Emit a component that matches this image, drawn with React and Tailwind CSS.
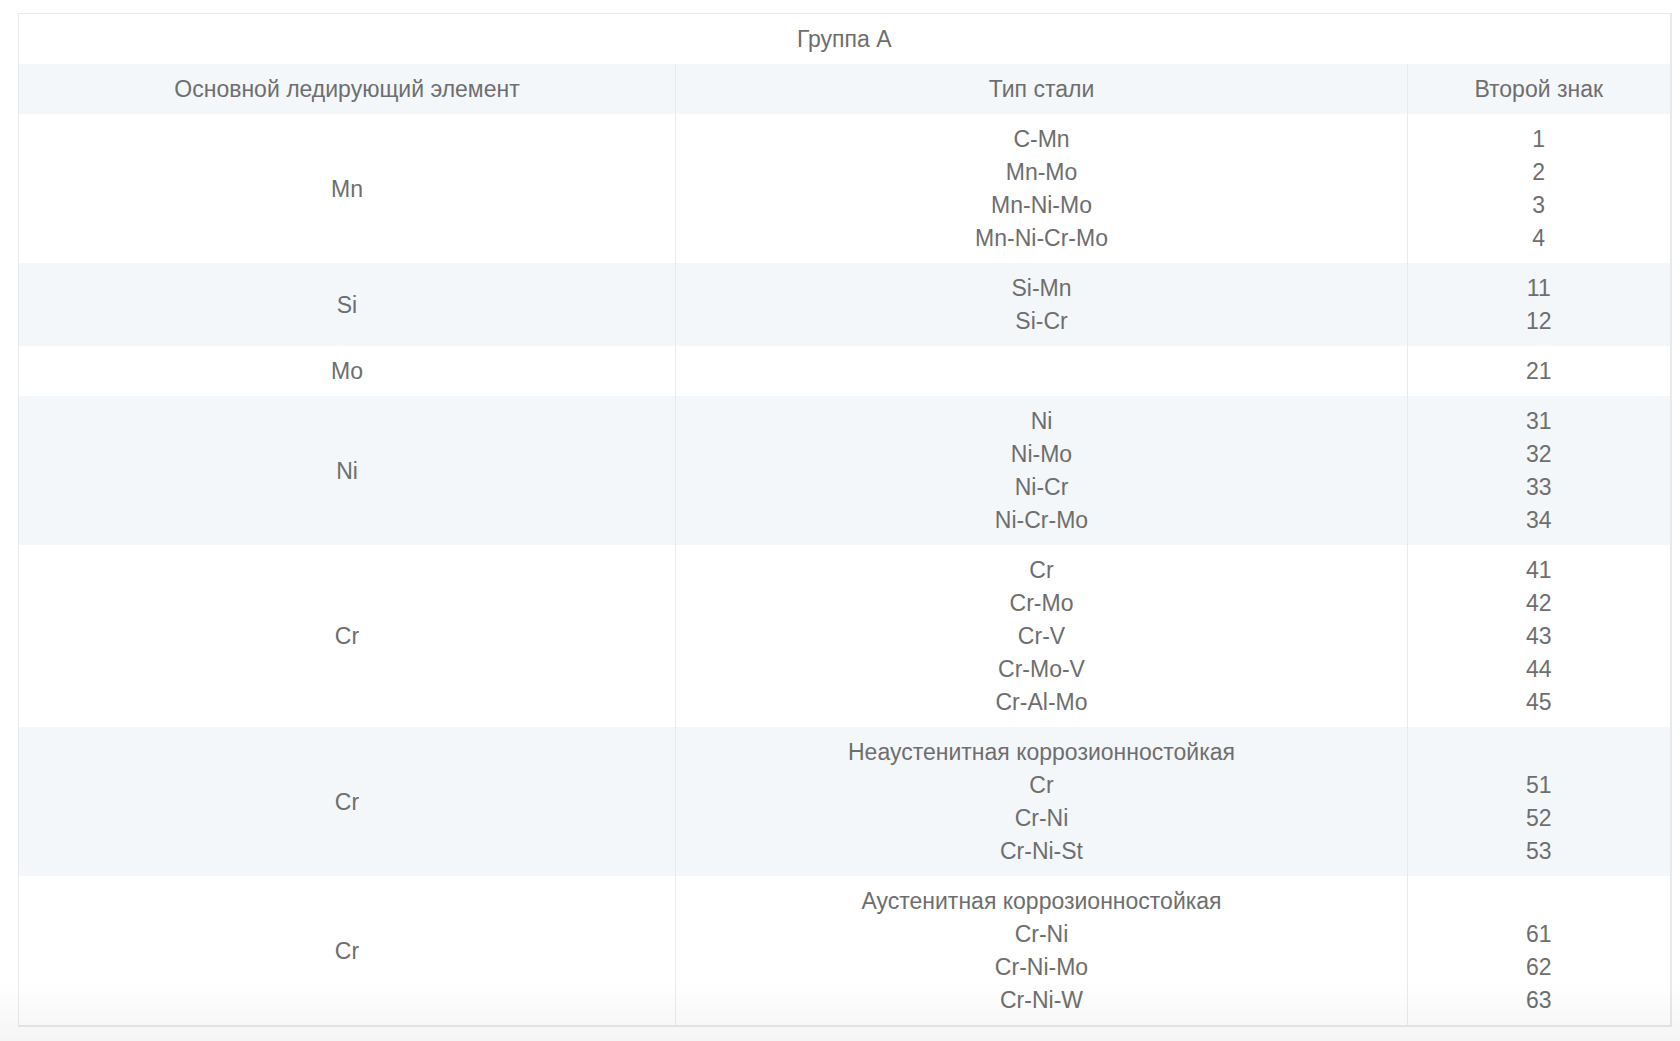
const rows = [
  { el: 'Mn', types: ['C-Mn', 'Mn-Mo', 'Mn-Ni-Mo', 'Mn-Ni-Cr-Mo'], codes: ['1', '2', '3', '4'] },
  { el: 'Si', types: ['Si-Mn', 'Si-Cr'], codes: ['11', '12'] },
  { el: 'Mo', types: [''], codes: ['21'] },
  { el: 'Ni', types: ['Ni', 'Ni-Mo', 'Ni-Cr', 'Ni-Cr-Mo'], codes: ['31', '32', '33', '34'] },
  { el: 'Cr', types: ['Cr', 'Cr-Mo', 'Cr-V', 'Cr-Mo-V', 'Cr-Al-Mo'], codes: ['41', '42', '43', '44', '45'] },
  { el: 'Cr', types: ['Неаустенитная коррозионностойкая', 'Cr', 'Cr-Ni', 'Cr-Ni-St'], codes: ['', '51', '52', '53'] },
  { el: 'Cr', types: ['Аустенитная коррозионностойкая', 'Cr-Ni', 'Cr-Ni-Mo', 'Cr-Ni-W'], codes: ['', '61', '62', '63'] },
]

function Lines({ items }) {
  return (
    <div className="flex flex-col">
      {items.map((t, i) => (
        <span key={i} className="block h-[33px] whitespace-nowrap">{t || '\u00a0'}</span>
      ))}
    </div>
  )
}

export default function App() {
  return (
    <div className="relative min-h-[1041px] bg-white pt-[13px] pl-[18px] font-['Liberation_Sans',Arial,sans-serif] text-[23px] leading-[33px] text-[#6e6e6e]">
      <table className="w-[1652px] table-fixed border-collapse border-t border-l border-r-2 border-b-2 border-[#e6eaee] text-center">
        <colgroup>
          <col className="w-[657px]" />
          <col className="w-[732px]" />
          <col className="w-[263px]" />
        </colgroup>
        <thead>
          <tr>
            <th colSpan={3} className="pt-[9px] pb-2 font-normal bg-white">Группа А</th>
          </tr>
          <tr className="bg-[#f4f7fa]">
            <th className="pt-[9px] pb-2 font-normal">Основной ледирующий элемент</th>
            <th className="pt-[9px] pb-2 font-normal border-l border-[#e8ebee]">Тип стали</th>
            <th className="pt-[9px] pb-2 font-normal border-l border-[#e8ebee]">Второй знак</th>
          </tr>
        </thead>
        <tbody>
          {rows.map((r, i) => (
            <tr key={i} className={i % 2 === 1 ? 'bg-[#f4f7fa]' : 'bg-white'}>
              <td className="pt-[9px] pb-2 align-middle">{r.el}</td>
              <td className="pt-[9px] pb-2 border-l border-[#e8ebee]"><Lines items={r.types} /></td>
              <td className="pt-[9px] pb-2 border-l border-[#e8ebee]"><Lines items={r.codes} /></td>
            </tr>
          ))}
        </tbody>
      </table>
      <div className="pointer-events-none absolute left-0 right-0 bottom-0 h-[60px] bg-linear-to-b from-transparent to-black/[0.04]" />
    </div>
  )
}
